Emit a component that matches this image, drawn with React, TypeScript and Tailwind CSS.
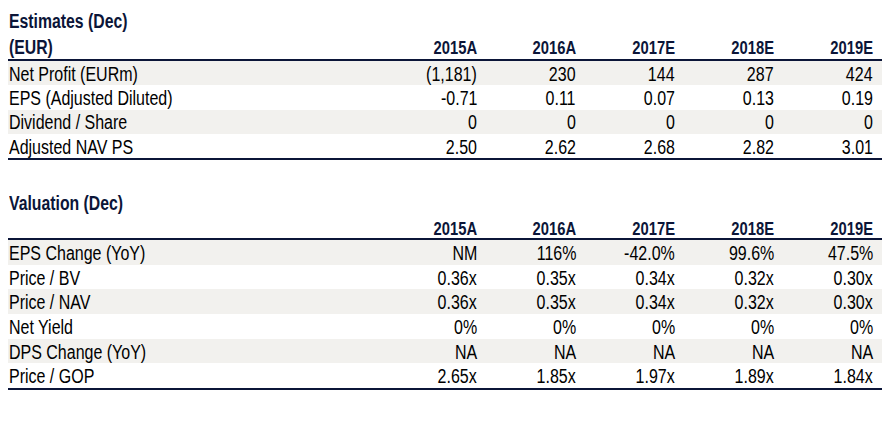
import React from "react";

const years = ["2015A", "2016A", "2017E", "2018E", "2019E"];

const est: [string, string[]][] = [
  ["Net Profit (EURm)", ["(1,181)", "230", "144", "287", "424"]],
  ["EPS (Adjusted Diluted)", ["-0.71", "0.11", "0.07", "0.13", "0.19"]],
  ["Dividend / Share", ["0", "0", "0", "0", "0"]],
  ["Adjusted NAV PS", ["2.50", "2.62", "2.68", "2.82", "3.01"]],
];

const val: [string, string[]][] = [
  ["EPS Change (YoY)", ["NM", "116%", "-42.0%", "99.6%", "47.5%"]],
  ["Price / BV", ["0.36x", "0.35x", "0.34x", "0.32x", "0.30x"]],
  ["Price / NAV", ["0.36x", "0.35x", "0.34x", "0.32x", "0.30x"]],
  ["Net Yield", ["0%", "0%", "0%", "0%", "0%"]],
  ["DPS Change (YoY)", ["NA", "NA", "NA", "NA", "NA"]],
  ["Price / GOP", ["2.65x", "1.85x", "1.97x", "1.89x", "1.84x"]],
];

function Row({ label, vals, shaded, h }: { label: string; vals: string[]; shaded: boolean; h: string }) {
  return (
    <div className={`flex items-center pt-[3px] pr-[9px] ${h} ${shaded ? "bg-[#f2f1ee]" : "bg-white"}`}>
      <div className="w-[370px] pl-[1px] whitespace-nowrap">
        <span className="inline-block origin-left scale-x-[0.82]">{label}</span>
      </div>
      {vals.map((v, i) => (
        <div key={i} className="w-[99px] text-right whitespace-nowrap">
          <span className="inline-block origin-right scale-x-[0.82]">{v}</span>
        </div>
      ))}
    </div>
  );
}

function Header({ label, h, pt }: { label: string; h: string; pt: string }) {
  return (
    <div className={`flex items-center pr-[9px] ${h} ${pt} border-b-2 border-[#0b1538]`}>
      <div className="w-[370px] pl-[1px] font-bold text-[#0b1538] text-[19.5px] whitespace-nowrap">
        <span className="inline-block origin-left scale-x-[0.81]">{label}</span>
      </div>
      {years.map((y) => (
        <div key={y} className="w-[99px] text-right font-bold text-[#0b1538] text-[18px] whitespace-nowrap">
          <span className="inline-block origin-right scale-x-[0.82]">{y}</span>
        </div>
      ))}
    </div>
  );
}

function Title({ text, mt }: { text: string; mt: string }) {
  return (
    <div className={`h-[26px] ${mt} pt-[2px] flex items-center pl-[1px] font-bold text-[19.5px] text-[#0b1538] whitespace-nowrap`}>
      <span className="inline-block origin-left scale-x-[0.81]">{text}</span>
    </div>
  );
}

export default function App() {
  return (
    <div
      className="w-[892px] h-[427px] bg-white px-[8px] pt-[8px] text-[19.5px] leading-none text-black"
      style={{ fontFamily: "'Liberation Sans', Arial, sans-serif" }}
    >
      <div className="w-[874px]">
        <Title text="Estimates (Dec)" mt="mt-0" />
        <Header label="(EUR)" h="h-[27px]" pt="pt-[3px]" />
        <div className="border-b-2 border-[#0b1538]">
          {est.map(([l, v], i) => (
            <Row key={l} label={l} vals={v} shaded={i % 2 === 0} h="h-[24.25px]" />
          ))}
        </div>
        <Title text="Valuation (Dec)" mt="mt-[30px]" />
        <Header label="" h="h-[24px]" pt="pt-[4px]" />
        <div className="border-b-2 border-[#0b1538]">
          {val.map(([l, v], i) => (
            <Row key={l} label={l} vals={v} shaded={i % 2 === 0} h="h-[24.67px]" />
          ))}
        </div>
      </div>
    </div>
  );
}
